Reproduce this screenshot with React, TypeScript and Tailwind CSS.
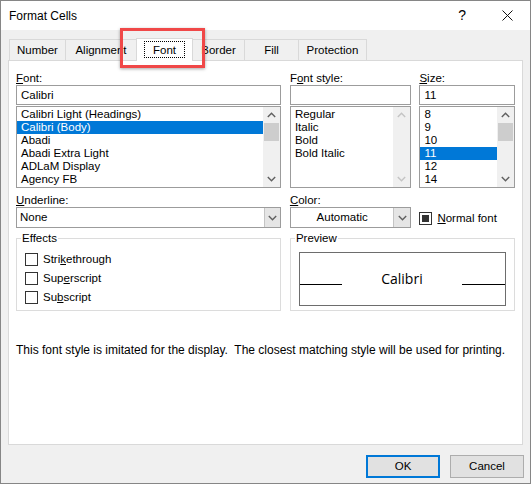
import React from "react";

const fontNames = [
  "Calibri Light (Headings)",
  "Calibri (Body)",
  "Abadi",
  "Abadi Extra Light",
  "ADLaM Display",
  "Agency FB",
];
const fontStyles = ["Regular", "Italic", "Bold", "Bold Italic"];
const fontSizes = ["8", "9", "10", "11", "12", "14"];

const tabs = [
  { label: "Number", w: "w-[56px]" },
  { label: "Alignment", w: "w-[71px]" },
  { label: "Font", w: "w-[57px]", active: true },
  { label: "Border", w: "w-[51px]" },
  { label: "Fill", w: "w-[54px]" },
  { label: "Protection", w: "w-[69px]" },
];

function Chevron({ up, color }: { up?: boolean; color: string }) {
  return (
    <svg width="9" height="6" viewBox="0 0 9 6">
      <polyline
        points={up ? "0.8,5 4.5,1.2 8.2,5" : "0.8,1 4.5,4.8 8.2,1"}
        fill="none"
        stroke={color}
        strokeWidth="1.4"
      />
    </svg>
  );
}

function ScrollBar({ disabled }: { disabled?: boolean }) {
  const c = disabled ? "#c4c4c4" : "#606060";
  return (
    <div className="w-[17px] h-full bg-[#f0f0f0] flex flex-col items-center">
      <div className="h-[16px] flex items-center justify-center">
        <Chevron up color={c} />
      </div>
      {!disabled && <div className="w-[15px] h-[18px] bg-[#cdcdcd]" />}
      <div className="flex-1" />
      <div className="h-[16px] flex items-center justify-center">
        <Chevron color={c} />
      </div>
    </div>
  );
}

function ListBox({
  items,
  selected,
  disabledScroll,
}: {
  items: string[];
  selected?: string;
  disabledScroll?: boolean;
}) {
  return (
    <div className="mt-px h-[82px] border border-[#9c9c9c] bg-white flex">
      <div className="flex-1 flex flex-col pt-px">
        {items.map((item) => (
          <div
            key={item}
            className={
              item === selected
                ? "h-[13px] leading-[13px] pl-[4px] bg-[#0078d7] text-white"
                : "h-[13px] leading-[13px] pl-[4px]"
            }
          >
            {item}
          </div>
        ))}
      </div>
      <ScrollBar disabled={disabledScroll} />
    </div>
  );
}

function Label({ children }: { children: React.ReactNode }) {
  return <div className="h-[16px] leading-[18px]">{children}</div>;
}

function CheckBox({ label }: { label: React.ReactNode }) {
  return (
    <div className="flex items-center h-[19px]">
      <div className="w-[13px] h-[13px] border border-[#333] bg-white" />
      <span className="ml-[5px]">{label}</span>
    </div>
  );
}

export default function App() {
  return (
    <div className="w-[531px] h-[484px] bg-[#f0f0f0] border border-[#868686] flex flex-col relative text-[11.5px] text-black font-['Liberation_Sans',Arial,sans-serif]">
      {/* Title bar */}
      <div className="h-[29px] bg-white flex items-center pl-[8px]">
        <span className="text-[12px]">Format Cells</span>
        <div className="flex-1" />
        <span className="text-[14px] mr-[36px]">?</span>
        <svg width="11" height="11" viewBox="0 0 11 11" className="mr-[17px]">
          <path d="M0.5 0.5 L10.5 10.5 M10.5 0.5 L0.5 10.5" stroke="#111" strokeWidth="1" />
        </svg>
      </div>

      {/* Tabs */}
      <div className="mt-[8px] ml-[8px] flex items-end h-[23px] -mb-px relative z-10">
        {tabs.map((t, i) =>
          t.active ? (
            <div
              key={t.label}
              className={`${t.w} h-[23px] bg-white border border-b-0 border-[#d9d9d9] flex items-center justify-center pb-[2px]`}
            >
              <span className="border border-dotted border-black px-[8px] h-[17px] leading-[16px]">
                {t.label}
              </span>
            </div>
          ) : (
            <div
              key={t.label}
              className={`${t.w} h-[21px] mb-px border-t border-[#d9d9d9] ${
                i === tabs.length - 1 ? "border-r" : ""
              } ${tabs[i - 1]?.active ? "" : "border-l"} bg-[#f0f0f0] flex items-center justify-center pt-[2px]`}
            >
              {t.label}
            </div>
          )
        )}
      </div>

      {/* Tab panel */}
      <div className="ml-[7px] w-[515px] h-[385px] bg-white border border-[#d9d9d9] px-[7px] pt-[8px] flex flex-col">
        <div className="flex">
          <div className="w-[266px]">
            <Label>
              <span className="underline">F</span>ont:
            </Label>
            <div className="h-[20px] border border-[#9c9c9c] pl-[4px] leading-[18px]">Calibri</div>
            <ListBox items={fontNames} selected="Calibri (Body)" />
            <div className="mt-[4px] h-[15px] leading-[17px]">
              <span className="underline">U</span>nderline:
            </div>
            <div className="h-[21px] border border-[#9c9c9c] flex">
              <div className="flex-1 pl-[3px] leading-[19px]">None</div>
              <div className="w-[16px] bg-[#e5e5e5] border-l border-[#c4c4c4] flex items-center justify-center">
                <Chevron color="#606060" />
              </div>
            </div>
          </div>

          <div className="w-[122px] ml-[9px]">
            <Label>
              F<span className="underline">o</span>nt style:
            </Label>
            <div className="h-[20px] border border-[#9c9c9c]" />
            <ListBox items={fontStyles} disabledScroll />
            <div className="mt-[4px] h-[15px] leading-[17px]">
              <span className="underline">C</span>olor:
            </div>
            <div className="h-[21px] border border-[#9c9c9c] flex">
              <div className="flex-1 text-center leading-[19px]">Automatic</div>
              <div className="w-[17px] bg-[#e5e5e5] border-l border-[#c4c4c4] flex items-center justify-center">
                <Chevron color="#606060" />
              </div>
            </div>
          </div>

          <div className="w-[96px] ml-[8px]">
            <Label>
              <span className="underline">S</span>ize:
            </Label>
            <div className="h-[20px] border border-[#9c9c9c] pl-[4px] leading-[18px]">11</div>
            <ListBox items={fontSizes} selected="11" />
            <div className="mt-[24px] flex items-center h-[13px] whitespace-nowrap">
              <div className="w-[13px] h-[13px] border border-[#333] bg-white flex items-center justify-center">
                <div className="w-[7px] h-[7px] bg-[#333]" />
              </div>
              <span className="ml-[5px]">
                <span className="underline">N</span>ormal font
              </span>
            </div>
          </div>
        </div>

        {/* Groups */}
        <div className="flex mt-[10px]">
          <div className="w-[266px] h-[73px] border border-[#dcdcdc] relative pl-[8px] pt-[11px]">
            <span className="absolute -top-[8px] left-[4px] bg-white px-px leading-[14px]">Effects</span>
            <CheckBox
              label={
                <>
                  Stri<span className="underline">k</span>ethrough
                </>
              }
            />
            <CheckBox
              label={
                <>
                  Sup<span className="underline">e</span>rscript
                </>
              }
            />
            <CheckBox
              label={
                <>
                  Su<span className="underline">b</span>script
                </>
              }
            />
          </div>

          <div className="w-[226px] ml-[9px] h-[73px] border border-[#dcdcdc] relative px-[8px] pt-[13px]">
            <span className="absolute -top-[8px] left-[4px] bg-white px-px leading-[14px]">Preview</span>
            <div className="h-[54px] border border-[#6d6d6d] flex items-center">
              <div className="w-[42px] h-px bg-black mt-[10px]" />
              <div className="flex-1 text-center text-[14px] font-['Open_Sans',sans-serif] -mt-[2px]">Calibri</div>
              <div className="w-[43px] h-px bg-black mt-[10px]" />
            </div>
          </div>
        </div>

        <div className="mt-[32px] leading-[15px] whitespace-nowrap text-[12px]">
          This font style is imitated for the display.&nbsp; The closest matching style will be used for printing.
        </div>
      </div>

      {/* Buttons */}
      <div className="flex justify-end gap-[10px] mt-[10px] pr-[6px]">
        <button className="w-[74px] h-[23px] bg-[#e1e1e1] border-2 border-[#0078d7]">OK</button>
        <button className="w-[74px] h-[23px] bg-[#e1e1e1] border border-[#adadad]">Cancel</button>
      </div>

      {/* Highlight box */}
      <div className="absolute left-[119px] top-[27px] w-[85px] h-[40px] border-[3px] border-[#f04848] shadow-[0_1px_3px_rgba(0,0,0,0.35)] z-20" />
    </div>
  );
}
